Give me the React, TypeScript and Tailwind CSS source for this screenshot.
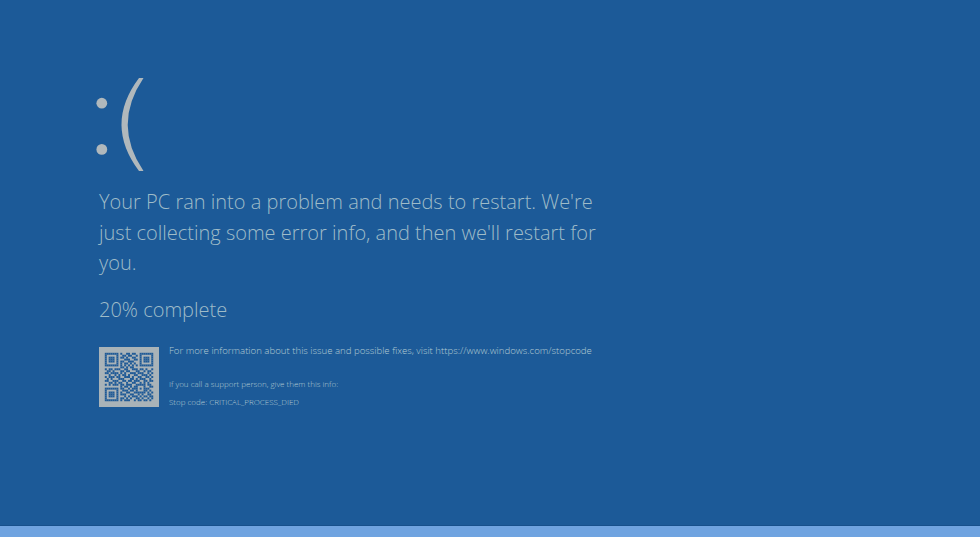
const QR_ROWS = [
  '1111111010011011001111111',
  '1000001001101100101000001',
  '1011101011010011001011101',
  '1011101000111001101011101',
  '1011101011001110001011101',
  '1000001010110101001000001',
  '1111111010101010101111111',
  '0000000011010110000000000',
  '1011011100110011101101001',
  '0110100011011000110010110',
  '1101111010100111011100101',
  '0010010101101001100111010',
  '1011101100111010011001101',
  '0101000111000110101110010',
  '1100111001101101110011011',
  '0011010110010011001010100',
  '1010111011011100111110110',
  '0000000010110101100010011',
  '1111111011001011101011100',
  '1000001001110110100011010',
  '1011101010011001111110101',
  '1011101011100110010100110',
  '1011101000101011101011011',
  '1000001011010100110100101',
  '1111111010111001011011010',
];

function QrCode() {
  return (
    <svg viewBox="-3 -3 31 31" className="h-[60px] w-[60px] shrink-0 bg-[#a9b3b8]">
      {QR_ROWS.map((row, y) =>
        row.split('').map((cell, x) =>
          cell === '1' ? <rect key={`${x}-${y}`} x={x} y={y} width="1.02" height="1.02" fill="#1f5a96" /> : null,
        ),
      )}
    </svg>
  );
}

// the sad face is a thin tapered arc, no installed font has that shape
function SadFace() {
  return (
    <svg viewBox="90 70 60 110" className="-ml-[9px] mt-[70px] h-[110px] w-[60px] shrink-0" fill="#b0b8bc">
      <circle cx="101.8" cy="103.2" r="5.4" />
      <circle cx="101.8" cy="149.4" r="5.4" />
      <path d="M139 78 Q104 124.5 139 171 L143.5 171 Q112 124.5 143.5 78 Z" />
    </svg>
  );
}

export default function App() {
  return (
    <div className="flex h-[537px] w-full flex-col overflow-hidden bg-[#1c5a98] font-['Open_Sans',sans-serif] font-light text-[#9fbcc8]">
      <main className="flex min-h-0 flex-1 flex-col pl-[99px]">
        <SadFace />
        <p className="mt-[7px] w-[510px] text-[20px] leading-[30.7px]">
          Your PC ran into a problem and needs to restart. We're just collecting some error info, and then we'll restart for you.
        </p>
        <p className="mt-[14.9px] text-[20px] leading-[31px]">20% complete</p>
        <div className="mt-[22px] flex gap-[10px]">
          <QrCode />
          <div className="flex flex-col text-[#b2cad2]">
            <p className="-mt-[1px] text-[9.65px] leading-[10px]">
              For more information about this issue and possible fixes, visit https://www.windows.com/stopcode
            </p>
            <p className="mt-[23px] text-[8px] leading-[10px]">If you call a support person, give them this info:</p>
            <p className="mt-[8px] text-[8px] leading-[10px]">Stop code: CRITICAL_PROCESS_DIED</p>
          </div>
        </div>
      </main>
      <div className="h-[12px] shrink-0 border-t border-[#17508c] bg-[#6fa3e0]" />
    </div>
  );
}
